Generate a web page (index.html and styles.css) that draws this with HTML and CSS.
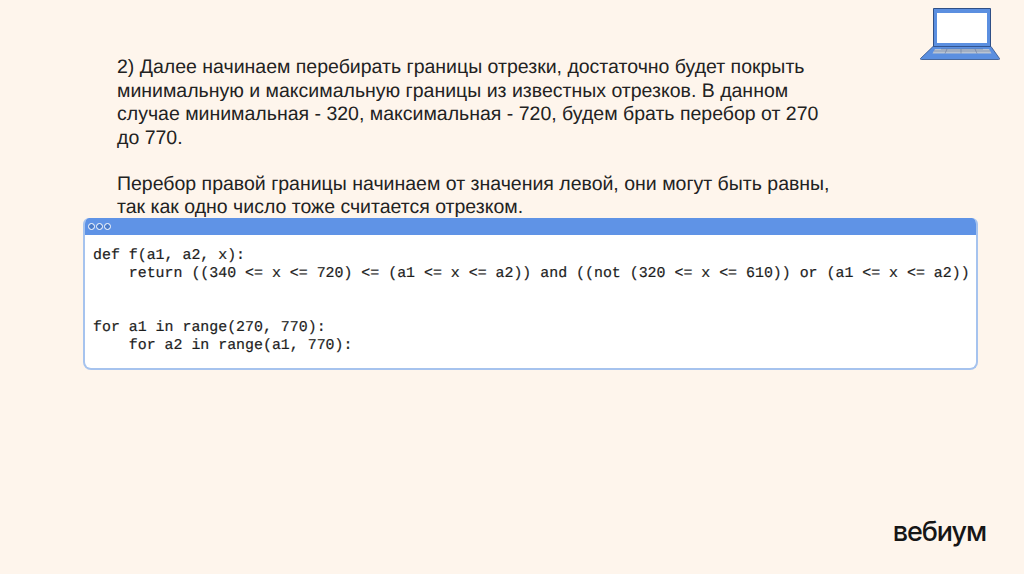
FILE: index.html
```html
<!DOCTYPE html>
<html lang="ru">
<head>
<meta charset="utf-8">
<title>Перебор границ</title>
<link rel="stylesheet" href="styles.css">
</head>
<body>
<main class="slide">
  <div class="top">
    <section class="text">
      <p>2) Далее начинаем перебирать границы отрезки, достаточно будет покрыть<br>минимальную и максимальную границы из известных отрезков. В данном<br>случае минимальная - 320, максимальная - 720, будем брать перебор от 270<br>до 770.</p>
      <p>Перебор правой границы начинаем от значения левой, они могут быть равны,<br>так как одно число тоже считается отрезком.</p>
    </section>
    <svg class="laptop" viewBox="0 0 80 52" width="80" height="52" aria-hidden="true">
      <path d="M13.500 .5h57v38h-57z" fill="#5b8fe0" stroke="#2f4f86" stroke-width="1" stroke-linejoin="round"/>
      <path d="M17 5h50v30H17z" fill="#fff"/>
      <path d="M13 38.500h58L79.500 50.500Q80 51.500 78.500 51.500H1.500Q0 51.500 .5 50.500z" fill="#5b8fe0" stroke="#2f4f86" stroke-width=".8" stroke-linejoin="round"/>
      <path d="M15 41h54l2.500 4.500h-59z" fill="#b9c3d2"/>
      <path d="M21 41h42M27 41l-2 4.500M41 41v4.500M55 41l2 4.500M14 43h56" stroke="#5a6f92" stroke-width=".5" fill="none"/>
    </svg>
  </div>
  <section class="window">
    <header class="titlebar">
      <span class="dot"></span><span class="dot"></span><span class="dot"></span>
    </header>
    <pre class="code">def f(a1, a2, x):
    return ((340 &lt;= x &lt;= 720) &lt;= (a1 &lt;= x &lt;= a2)) and ((not (320 &lt;= x &lt;= 610)) or (a1 &lt;= x &lt;= a2))


for a1 in range(270, 770):
    for a2 in range(a1, 770):</pre>
  </section>
  <footer class="footer"><span class="brand">вебиум</span></footer>
</main>
</body>
</html>
```
FILE: styles.css
```css
* { box-sizing: border-box; }
html, body { margin: 0; padding: 0; }
body { background: #fef5ec; }
.slide {
  width: 1024px;
  height: 574px;
  overflow: hidden;
  display: flex;
  flex-direction: column;
  background: #fef5ec;
  padding: 0 46px 0 83px;
}
.top {
  display: flex;
  justify-content: space-between;
  height: 218px;
  padding: 56px 0 0 34px;
  position: relative;
}
.text {
  font-family: "Liberation Sans", Arial, sans-serif;
  font-size: 19.5px;
  line-height: 23.5px;
  color: #222;
  white-space: nowrap;
  text-rendering: geometricPrecision;
}
.text p { margin: 0 0 22.500px; }
.laptop {
  position: absolute;
  left: 837px;
  top: 8px;
}
.window {
  height: 152px;
  background: #fff;
  border: 2px solid #a6c3ee;
  border-top: 0;
  border-radius: 6px 6px 8px 8px;
  overflow: hidden;
}
.titlebar {
  height: 17px;
  background: #5f93e6;
  display: flex;
  align-items: center;
  gap: 1px;
  padding-left: 3px;
}
.dot {
  width: 7px;
  height: 7px;
  border-radius: 50%;
  border: 1.500px solid #fff;
  background: #4a7bc9;
}
.code {
  margin: 0;
  padding: 12px 0 0 8px;
  font-family: "Liberation Mono", "Courier New", monospace;
  font-size: 14.92px;
  line-height: 18px;
  color: #1d1d1d;
  -webkit-text-stroke: 0.2px #1d1d1d;
  text-rendering: geometricPrecision;
}
.footer {
  margin-top: auto;
  display: flex;
  justify-content: flex-end;
}
.brand {
  font-family: Inter, "Liberation Sans", sans-serif;
  font-size: 27px;
  line-height: 30px;
  font-weight: 500;
  letter-spacing: -1.1px;
  color: #161616;
  margin-right: -8px;
  margin-bottom: 27px;
}
```
